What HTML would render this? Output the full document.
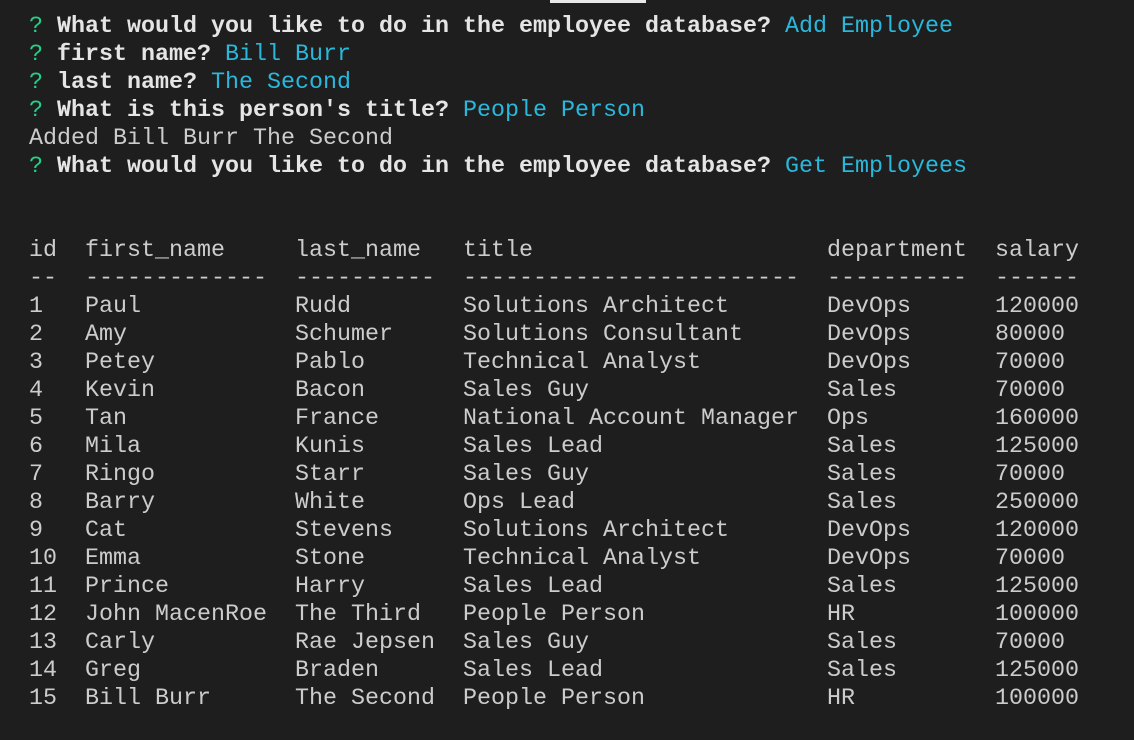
<!DOCTYPE html>
<html><head><style>
html,body{margin:0;padding:0;background:#1e1e1e;width:1134px;height:740px;overflow:hidden}
.bar{position:absolute;left:550px;top:0;width:96px;height:3px;background:#e8e8e8}
pre{position:absolute;left:29px;top:13px;margin:0;font-family:"Liberation Mono",monospace;font-size:23.33px;line-height:28px;color:#cccccc}
.g{color:#23d18b}.c{color:#29b8db}b{font-weight:bold;color:#e5e5e5}
</style></head><body>
<div class="bar"></div>
<pre><span class="g">?</span> <b>What would you like to do in the employee database?</b> <span class="c">Add Employee</span>
<span class="g">?</span> <b>first name?</b> <span class="c">Bill Burr</span>
<span class="g">?</span> <b>last name?</b> <span class="c">The Second</span>
<span class="g">?</span> <b>What is this person's title?</b> <span class="c">People Person</span>
Added Bill Burr The Second
<span class="g">?</span> <b>What would you like to do in the employee database?</b> <span class="c">Get Employees</span>


id  first_name     last_name   title                     department  salary
--  -------------  ----------  ------------------------  ----------  ------
1   Paul           Rudd        Solutions Architect       DevOps      120000
2   Amy            Schumer     Solutions Consultant      DevOps      80000
3   Petey          Pablo       Technical Analyst         DevOps      70000
4   Kevin          Bacon       Sales Guy                 Sales       70000
5   Tan            France      National Account Manager  Ops         160000
6   Mila           Kunis       Sales Lead                Sales       125000
7   Ringo          Starr       Sales Guy                 Sales       70000
8   Barry          White       Ops Lead                  Sales       250000
9   Cat            Stevens     Solutions Architect       DevOps      120000
10  Emma           Stone       Technical Analyst         DevOps      70000
11  Prince         Harry       Sales Lead                Sales       125000
12  John MacenRoe  The Third   People Person             HR          100000
13  Carly          Rae Jepsen  Sales Guy                 Sales       70000
14  Greg           Braden      Sales Lead                Sales       125000
15  Bill Burr      The Second  People Person             HR          100000
</pre>
</body></html>
